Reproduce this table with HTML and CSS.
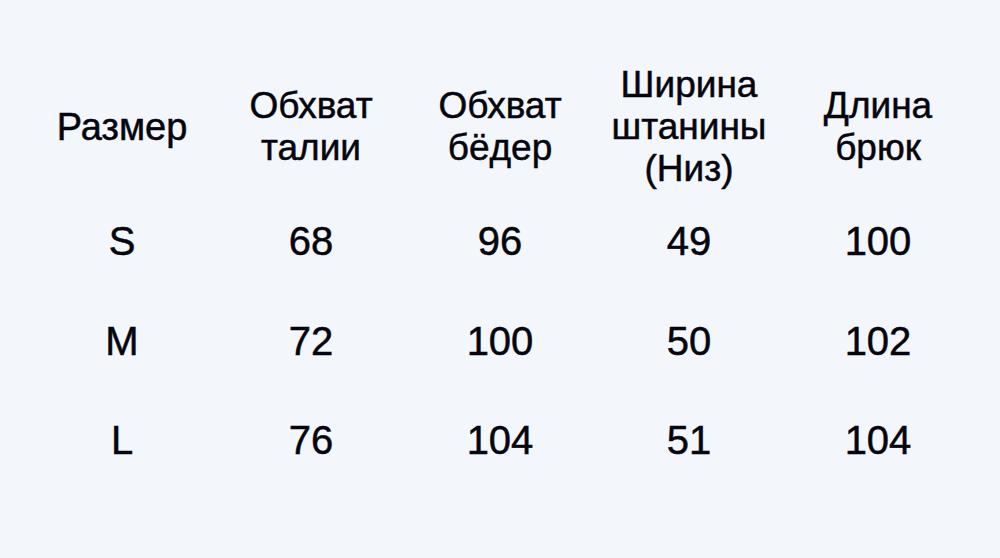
FILE: index.html
```html
<!DOCTYPE html>
<html lang="ru">
<head>
<meta charset="utf-8">
<link rel="stylesheet" href="styles.css">
</head>
<body>
<div class="table">
  <div class="cell head">Размер</div>
  <div class="cell head">Обхват<br>талии</div>
  <div class="cell head">Обхват<br>бёдер</div>
  <div class="cell head">Ширина<br>штанины<br>(Низ)</div>
  <div class="cell head">Длина<br>брюк</div>

  <div class="cell">S</div>
  <div class="cell">68</div>
  <div class="cell">96</div>
  <div class="cell">49</div>
  <div class="cell">100</div>

  <div class="cell">M</div>
  <div class="cell">72</div>
  <div class="cell">100</div>
  <div class="cell">50</div>
  <div class="cell">102</div>

  <div class="cell">L</div>
  <div class="cell">76</div>
  <div class="cell">104</div>
  <div class="cell">51</div>
  <div class="cell">104</div>
</div>
</body>
</html>
```
FILE: styles.css
```css
html, body {
  margin: 0;
  padding: 0;
}
body {
  width: 1000px;
  height: 558px;
  background: #f3f6fa;
  color: #05050d;
  font-family: "Liberation Sans", Arial, sans-serif;
  overflow: hidden;
}
.table {
  display: grid;
  grid-template-columns: repeat(5, 189px);
  grid-template-rows: 128px 100px 99px 99px;
  justify-content: center;
  padding-top: 63px;
}
.cell {
  display: flex;
  align-items: center;
  justify-content: center;
  text-align: center;
  font-size: 40px;
  line-height: 42px;
  -webkit-text-stroke: 0.5px #05050d;
}
.head {
  font-size: 37px;
  line-height: 42px;
}
.head:first-child {
  font-size: 38px;
}
```
